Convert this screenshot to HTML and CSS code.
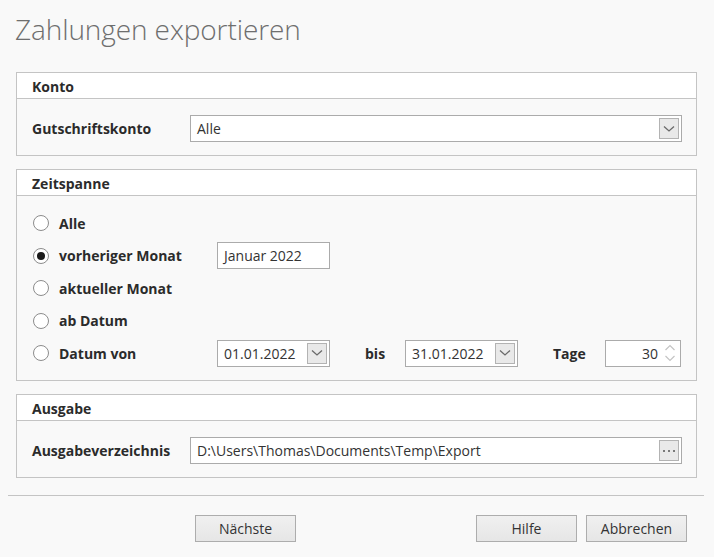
FILE: index.html
```html
<!DOCTYPE html>
<html lang="de">
<head>
<meta charset="utf-8">
<link rel="stylesheet" href="styles.css">
</head>
<body>
<h1 class="title">Zahlungen exportieren</h1>

<section class="group">
  <div class="group-head">Konto</div>
  <div class="group-body field-body">
    <div class="field-row">
      <span class="label field-label">Gutschriftskonto</span>
      <div class="box wide">
        <span class="value">Alle</span>
        <span class="drop-btn"><svg width="12" height="8" viewBox="0 0 12 8"><path d="M1 1.5 L6 6 L11 1.5" fill="none" stroke="#6a6a6a" stroke-width="1.3"/></svg></span>
      </div>
    </div>
  </div>
</section>

<section class="group">
  <div class="group-head">Zeitspanne</div>
  <div class="group-body radio-body">
    <div class="radio-row">
      <span class="radio"></span><span class="label opt">Alle</span>
    </div>
    <div class="radio-row">
      <span class="radio checked"></span><span class="label opt">vorheriger Monat</span>
      <div class="box short"><span class="value">Januar 2022</span></div>
    </div>
    <div class="radio-row">
      <span class="radio"></span><span class="label opt">aktueller Monat</span>
    </div>
    <div class="radio-row">
      <span class="radio"></span><span class="label opt">ab Datum</span>
    </div>
    <div class="radio-row">
      <span class="radio"></span><span class="label opt">Datum von</span>
      <div class="box short">
        <span class="value">01.01.2022</span>
        <span class="drop-btn"><svg width="12" height="8" viewBox="0 0 12 8"><path d="M1 1.5 L6 6 L11 1.5" fill="none" stroke="#6a6a6a" stroke-width="1.3"/></svg></span>
      </div>
      <span class="label bis">bis</span>
      <div class="box short">
        <span class="value">31.01.2022</span>
        <span class="drop-btn"><svg width="12" height="8" viewBox="0 0 12 8"><path d="M1 1.5 L6 6 L11 1.5" fill="none" stroke="#6a6a6a" stroke-width="1.3"/></svg></span>
      </div>
      <span class="label tage">Tage</span>
      <div class="box spin">
        <span class="value num">30</span>
        <span class="spin-arrows"><svg width="12" height="20" viewBox="0 0 12 20"><path d="M1.5 7 L6 2.5 L10.5 7" fill="none" stroke="#c4c4c4" stroke-width="1.2"/><path d="M1.5 13 L6 17.5 L10.5 13" fill="none" stroke="#c4c4c4" stroke-width="1.2"/></svg></span>
      </div>
    </div>
  </div>
</section>

<section class="group">
  <div class="group-head">Ausgabe</div>
  <div class="group-body field-body">
    <div class="field-row">
      <span class="label field-label">Ausgabeverzeichnis</span>
      <div class="box wide">
        <span class="value">D:\Users\Thomas\Documents\Temp\Export</span>
        <span class="drop-btn dots"><svg width="14" height="4" viewBox="0 0 14 4"><rect x="1" y="1" width="2" height="2" fill="#7a7a7a"/><rect x="6" y="1" width="2" height="2" fill="#7a7a7a"/><rect x="11" y="1" width="2" height="2" fill="#7a7a7a"/></svg></span>
      </div>
    </div>
  </div>
</section>

<hr class="sep">

<footer class="buttons">
  <button class="btn">Nächste</button>
  <span class="spacer"></span>
  <button class="btn">Hilfe</button>
  <button class="btn">Abbrechen</button>
</footer>
</body>
</html>
```

FILE: styles.css
```css
* { box-sizing: border-box; }
html, body { margin: 0; padding: 0; }
body {
  width: 714px;
  height: 557px;
  background: #f9f9f9;
  font-family: "Open Sans", "Noto Sans", sans-serif;
  font-size: 14px;
  color: #333;
  overflow: hidden;
}
.title {
  margin: 0;
  padding: 10px 0 0 15px;
  height: 58px;
  font-size: 28px;
  font-weight: 300;
  line-height: 38px;
  color: #6e6e6e;
  letter-spacing: -0.1px;
}
.group {
  margin: 14px 17px 0 16px;
  border: 1px solid #c4c4c4;
}
.group + .group { margin-top: 13px; }
.group-head {
  height: 26px;
  line-height: 28px;
  background: #fff;
  border-bottom: 1px solid #c4c4c4;
  padding-left: 15px;
  font-weight: 700;
  font-size: 14px;
  color: #2b2b2b;
}
.label {
  font-weight: 700;
  font-size: 14px;
  color: #2b2b2b;
}
.field-body { padding: 16px 14px 13px 15px; }
.field-row { display: flex; align-items: center; }
.field-label { width: 158px; flex: none; }
.box {
  height: 27px;
  border: 1px solid #ababab;
  background: #fff;
  display: flex;
  align-items: center;
  padding: 0 2px 0 6px;
  font-size: 14px;
  color: #333;
  flex: none;
}
.wide { flex: 1; }
.value { flex: 1; white-space: nowrap; }
.drop-btn {
  width: 20px;
  height: 21px;
  border: 1px solid #b3b3b3;
  background: #e9e9e9;
  display: flex;
  align-items: center;
  justify-content: center;
}
.radio-body { padding: 11px 10px 10.5px 16px; }
.radio-row {
  height: 32.5px;
  display: flex;
  align-items: center;
}
.radio {
  width: 16px;
  height: 16px;
  border-radius: 50%;
  border: 1px solid #8c8c8c;
  background: #fff;
  margin-right: 10px;
  position: relative;
  flex: none;
}
.radio.checked::after {
  content: "";
  position: absolute;
  left: 3px;
  top: 3px;
  width: 8px;
  height: 8px;
  border-radius: 50%;
  background: #1a1a1a;
}
.opt { width: 158px; flex: none; white-space: nowrap; }
.short { width: 113px; }
.bis { margin-left: 35px; width: 40px; flex: none; }
.tage { margin-left: 35px; width: 52px; flex: none; }
.spin { width: 76px; padding-right: 4px; }
.num { text-align: right; padding-right: 6px; }
.spin-arrows { display: flex; align-items: center; }
.sep {
  margin: 17px 10px 0 8px;
  border: 0;
  border-top: 1px solid #c4c4c4;
  height: 0;
}
.buttons {
  display: flex;
  padding: 19px 27px 0 195px;
  gap: 9px;
}
.spacer { flex: 1; }
.btn {
  width: 101px;
  height: 27px;
  border: 1px solid #adadad;
  background: linear-gradient(#f0f0f0, #e6e6e6);
  font-family: inherit;
  font-size: 14px;
  color: #333;
  padding: 0;
}
```
